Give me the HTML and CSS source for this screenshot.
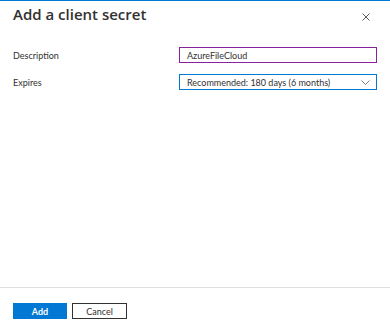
FILE: index.html
```html
<!DOCTYPE html>
<html lang="en">

<head>
    <meta charset="UTF-8">
    <meta name="viewport" content="width=device-width, initial-scale=1.0">
    <title>Add a client secret</title>
    <link rel="stylesheet" href="styles.css">
</head>

<body>
    <div class="panel">
        <div class="panel-header">
            <h2>Add a client secret</h2>
            <span class="close" title="Close">
                <svg width="8" height="8" viewBox="0 0 8 8">
                    <path d="M0.5 0.5 L7.5 7.5 M7.5 0.5 L0.5 7.5" stroke="#605e5c" stroke-width="1" fill="none" />
                </svg>
            </span>
        </div>

        <form class="panel-body" id="secretForm">
            <div class="form-row">
                <label for="description">Description</label>
                <input type="text" id="description" name="description" value="AzureFileCloud">
            </div>
            <div class="form-row">
                <label for="expires">Expires</label>
                <div class="select-box" id="expires">
                    <span>Recommended: 180 days (6 months)</span>
                    <svg width="9" height="5" viewBox="0 0 9 5">
                        <path d="M0.5 0.5 L4.5 4.5 L8.5 0.5" stroke="#605e5c" stroke-width="0.8" fill="none" />
                    </svg>
                </div>
            </div>
        </form>

        <div class="panel-footer">
            <button type="submit" class="btn-primary" form="secretForm">Add</button>
            <button type="button" class="btn-default">Cancel</button>
        </div>
    </div>
</body>

</html>
```

FILE: styles.css
```css
html,
body {
    margin: 0;
    padding: 0;
    background: #fff;
}

body {
    font-family: "Lato", "Open Sans", sans-serif;
    color: #323130;
}

.panel {
    height: 332px;
    box-sizing: border-box;
    border-top: 1px solid #0078d4;
    display: flex;
    flex-direction: column;
}

.panel-header {
    display: flex;
    justify-content: space-between;
    align-items: flex-start;
    padding: 2px 20px 0 13px;
    height: 44px;
    box-sizing: border-box;
}

.panel-header h2 {
    margin: 0;
    font-family: "Open Sans", sans-serif;
    font-size: 15px;
    font-weight: 600;
    line-height: 22px;
    color: #323130;
}

.close {
    display: block;
    margin-top: 10px;
    width: 8px;
    height: 8px;
    cursor: pointer;
}

.close svg {
    display: block;
}

.panel-body {
    flex: 1;
    padding: 2px 13px 0 13px;
    display: flex;
    flex-direction: column;
    gap: 11px;
}

.form-row {
    display: flex;
    align-items: center;
    height: 16px;
}

.form-row label {
    width: 166px;
    flex-shrink: 0;
    font-size: 9px;
    color: #323130;
}

.form-row input[type="text"],
.select-box {
    width: 198px;
    height: 16px;
    box-sizing: border-box;
    margin: 0;
    padding: 0 7px;
    font-family: inherit;
    font-size: 9px;
    color: #323130;
    background: #fff;
    outline: none;
}

.form-row input[type="text"] {
    border: 1px solid #8a22a0;
    border-radius: 0;
}

.select-box {
    border: 1px solid #0078d4;
    display: flex;
    align-items: center;
    justify-content: space-between;
    padding-right: 6px;
}

.select-box svg {
    display: block;
}

.panel-footer {
    border-top: 1px solid #e1dfdd;
    padding: 15px 13px 13px 13px;
    display: flex;
    gap: 5px;
}

.panel-footer button {
    height: 16px;
    box-sizing: border-box;
    padding: 0;
    font-family: inherit;
    font-size: 9px;
    cursor: pointer;
}

.btn-primary {
    width: 54px;
    background-color: #0078d4;
    color: white;
    border: none;
    font-weight: 700;
}

.btn-default {
    width: 55px;
    background-color: #fff;
    color: #323130;
    border: 1px solid #323130;
}
```
